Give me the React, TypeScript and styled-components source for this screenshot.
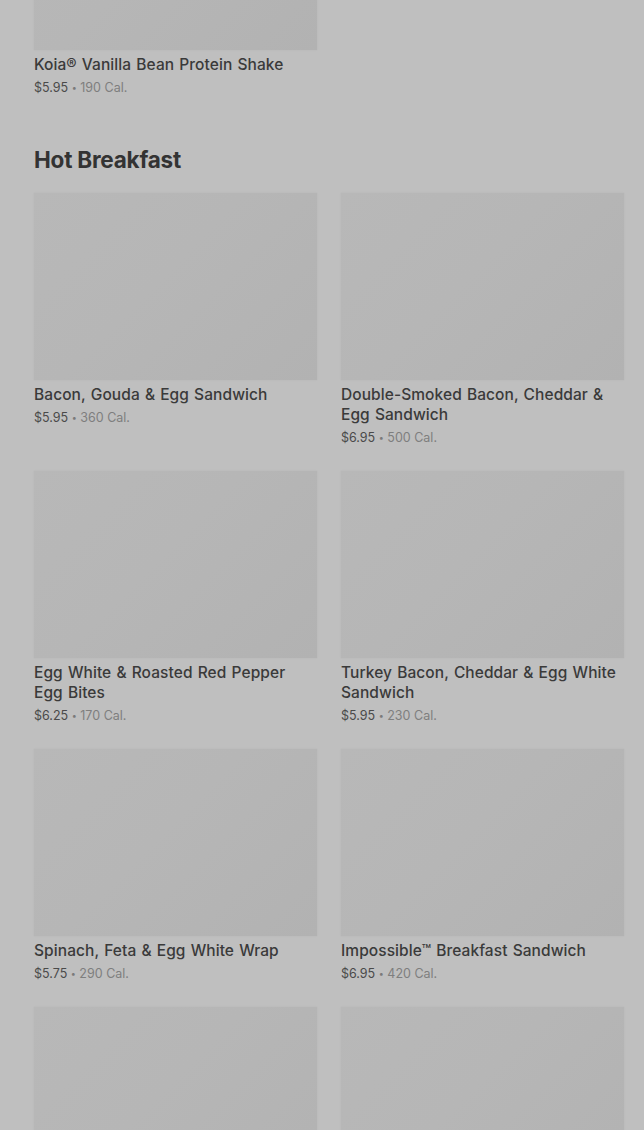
import styled, { createGlobalStyle } from "styled-components";

const GlobalStyle = createGlobalStyle`
   html, body {
      margin: 0;
      padding: 0;
      background: #bfbfbf;
      font-family: Inter, "Noto Sans", sans-serif;
      overflow: hidden;
   }
`;

const Page = styled.div`
   padding: 0 20px 0 34px;
   margin-top: -137px;
`;

const Section = styled.section`
   margin-bottom: 47px;
`;

const SectionTitle = styled.h2`
   margin: 0 0 17px;
   font-size: 22.5px;
   line-height: 32px;
   font-weight: 700;
   color: #333333;
   letter-spacing: -0.01em;
`;

const Grid = styled.div`
   display: grid;
   grid-template-columns: 283px 283px;
   column-gap: 24px;
   row-gap: 24px;
`;

const CardWrapper = styled.div`
   display: flex;
   flex-direction: column;
`;

const CardImage = styled.div`
   height: 187px;
   background: linear-gradient(135deg, #b8b8b8 0%, #b6b6b6 45%, #b2b2b2 100%);
   box-shadow: 0 0 2px rgba(0, 0, 0, 0.06);
`;

const CardName = styled.div`
   margin-top: 5px;
   font-size: 15.5px;
   line-height: 20px;
   font-weight: 500;
   color: #3a3a3a;
   letter-spacing: 0.005em;
   word-spacing: 0.9px;
`;

const CardMeta = styled.div`
   margin-top: 4px;
   font-size: 12.5px;
   line-height: 18px;
   color: #4a4a4a;
`;

const Dot = styled.span`
   font-size: 9px;
   color: #7a7a7a;
   vertical-align: 1px;
`;

const Calories = styled.span`
   color: #7e7e7e;
`;

interface IItem {
   name: string;
   price: string;
   cal: number;
}

const shakes: IItem[] = [
   { name: "Koia® Vanilla Bean Protein Shake", price: "$5.95", cal: 190 },
];

const hotBreakfast: IItem[] = [
   { name: "Bacon, Gouda & Egg Sandwich", price: "$5.95", cal: 360 },
   { name: "Double-Smoked Bacon, Cheddar & Egg Sandwich", price: "$6.95", cal: 500 },
   { name: "Egg White & Roasted Red Pepper Egg Bites", price: "$6.25", cal: 170 },
   { name: "Turkey Bacon, Cheddar & Egg White Sandwich", price: "$5.95", cal: 230 },
   { name: "Spinach, Feta & Egg White Wrap", price: "$5.75", cal: 290 },
   { name: "Impossible™ Breakfast Sandwich", price: "$6.95", cal: 420 },
   { name: "", price: "", cal: 0 },
   { name: "", price: "", cal: 0 },
];

const ProductCard: React.FC<IItem> = ({ name, price, cal }) => (
   <CardWrapper>
      <CardImage />
      {name && <CardName>{name}</CardName>}
      {price && (
         <CardMeta>
            {price} <Dot>•</Dot> <Calories>{cal} Cal.</Calories>
         </CardMeta>
      )}
   </CardWrapper>
);

export default function App() {
   return (
      <>
         <GlobalStyle />
         <Page>
            <Section>
               <Grid>
                  {shakes.map((item) => (
                     <ProductCard key={item.name} {...item} />
                  ))}
               </Grid>
            </Section>
            <Section>
               <SectionTitle>Hot Breakfast</SectionTitle>
               <Grid>
                  {hotBreakfast.map((item, i) => (
                     <ProductCard key={i} {...item} />
                  ))}
               </Grid>
            </Section>
         </Page>
      </>
   );
}
